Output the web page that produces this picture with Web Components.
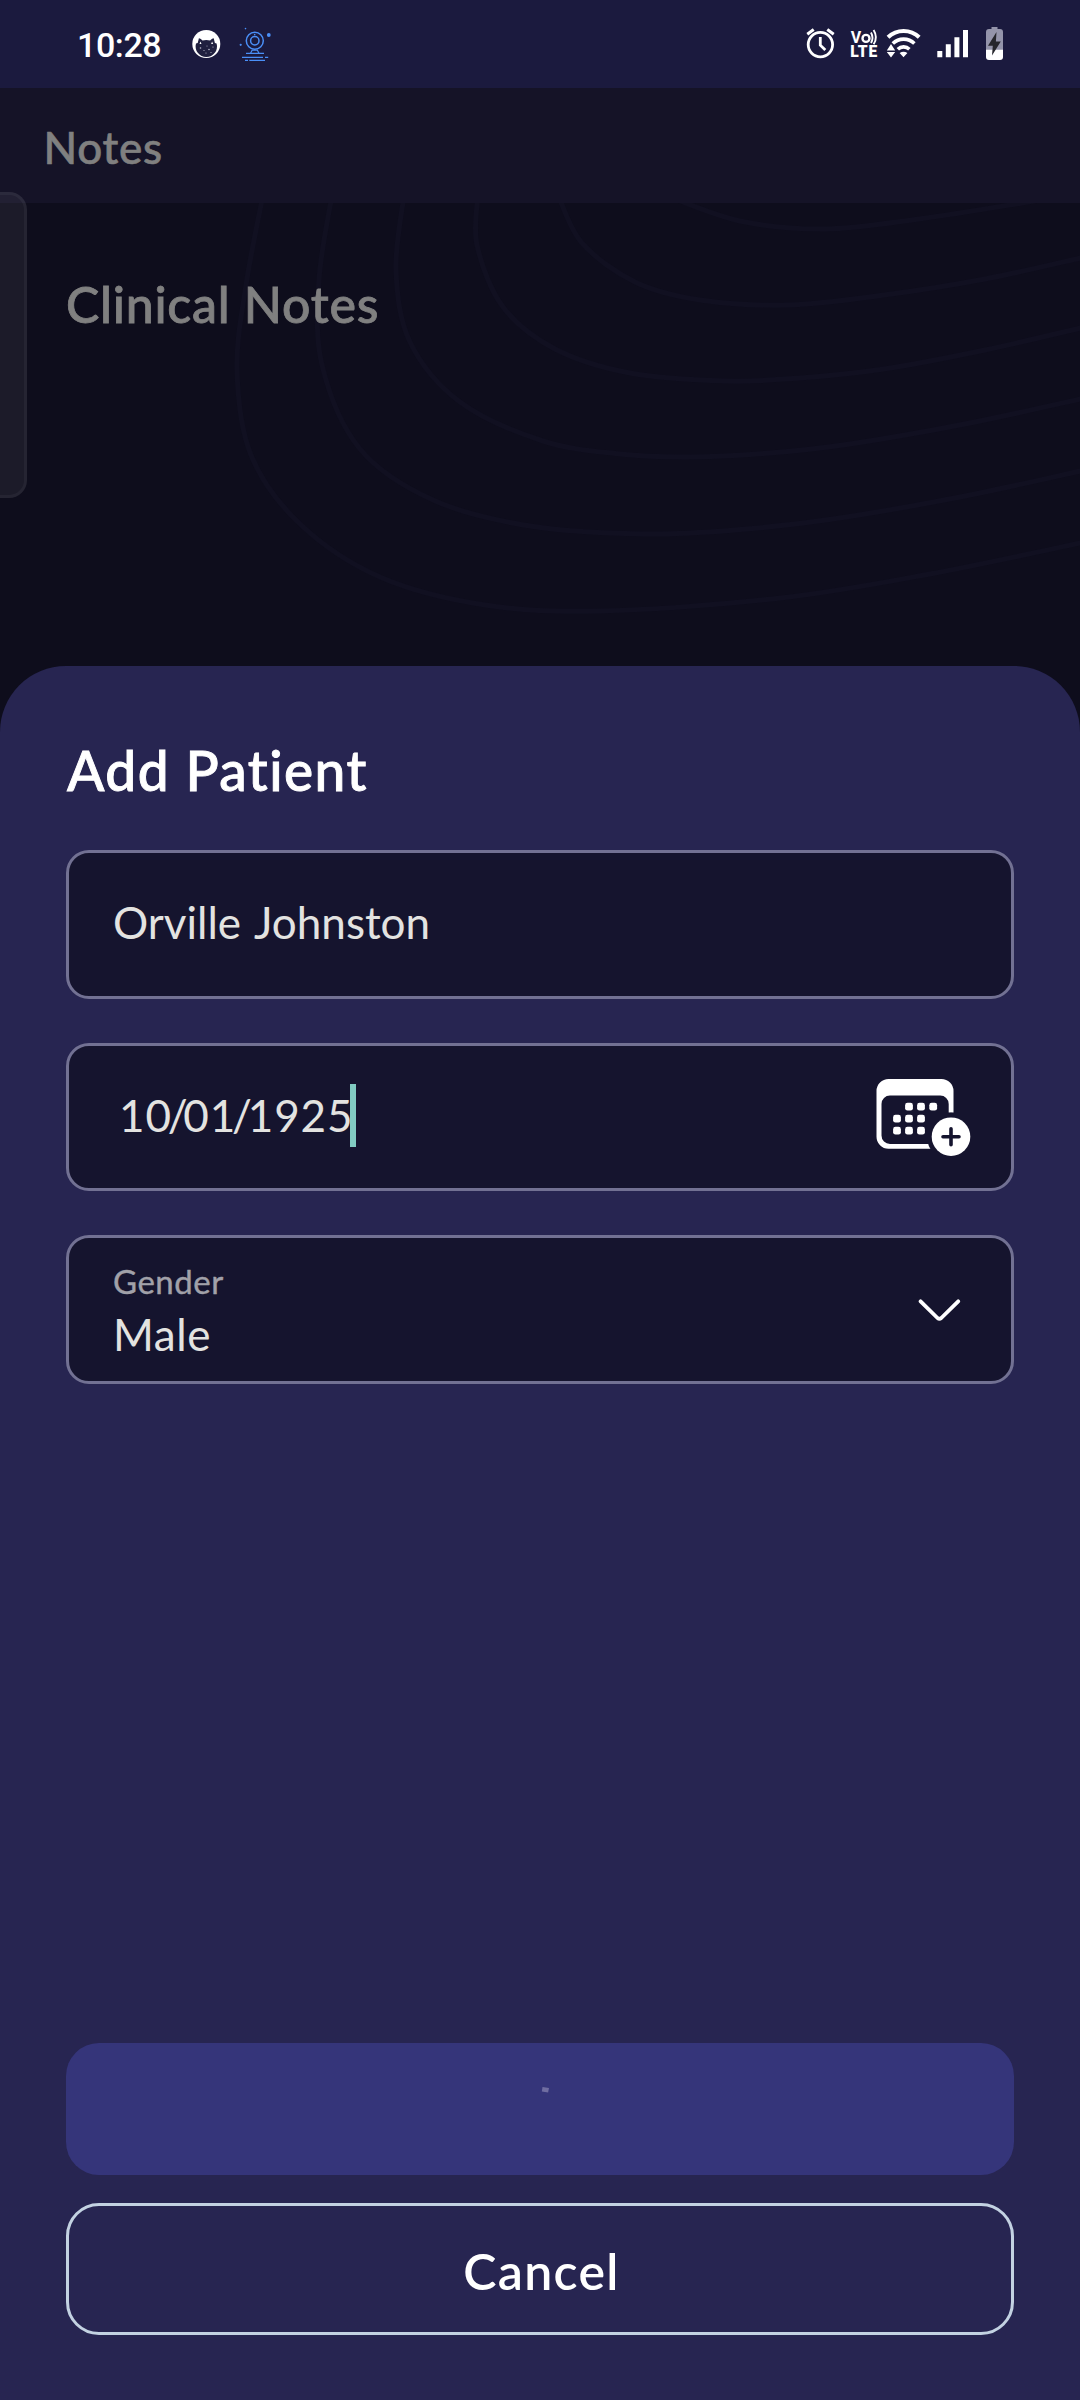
<!DOCTYPE html>
<html lang="en">
<head>
<meta charset="utf-8">
<title>Add Patient</title>
<style>
html,body{margin:0;background:#0e0d1c}
body{font-family:Lato,"Open Sans",sans-serif}
.date i{font-style:normal;letter-spacing:0;margin:0 -4.2px}
</style>
</head>
<body>
<app-screen>
  <status-bar slot="status">10:28</status-bar>
  <app-bar slot="bar">Notes</app-bar>
  <notes-pane slot="pane">Clinical Notes</notes-pane>
  <bottom-sheet slot="sheet">
    <span slot="title">Add Patient</span>
    <form-field style="height:149px;--ls:0px;--ws:3px">Orville Johnston</form-field>
    <form-field style="height:148px;--pl:50px;--pr:40px;--ls:.9px"><span class="date">10<i>/</i>01<i>/</i>1925</span><text-caret></text-caret><calendar-icon slot="icon"></calendar-icon></form-field>
    <form-field style="height:149px;--pr:50px;--ls:.6px" label="Gender">Male<chevron-icon slot="icon"></chevron-icon></form-field>
    <sheet-button slot="actions" kind="primary"><busy-mark></busy-mark></sheet-button>
    <sheet-button slot="actions" kind="outline">Cancel</sheet-button>
  </bottom-sheet>
</app-screen>
<script>
const define = (name, html, setup) => customElements.define(name, class extends HTMLElement {
  constructor() {
    super();
    const t = document.createElement('template');
    t.innerHTML = html;
    this.attachShadow({mode: 'open'}).append(t.content.cloneNode(true));
  }
  connectedCallback() { if (setup) setup(this, this.shadowRoot); }
});

define('app-screen', `
<style>
:host{display:flex;flex-direction:column;position:relative;width:1080px;height:2400px;background:#0e0d1c;overflow:hidden}
::slotted([slot=sheet]){flex:1}
.handle{position:absolute;left:-24px;top:192px;width:51px;height:306px;box-sizing:border-box;border:3px solid rgba(255,255,255,.045);border-radius:18px;background:rgba(255,255,255,.06)}
</style>
<slot name="status"></slot><slot name="bar"></slot><slot name="pane"></slot><slot name="sheet"></slot>
<div class="handle"></div>`);

define('status-bar', `
<style>
:host{display:flex;height:88px;box-sizing:border-box;background:#1b1a3e;color:#fff;padding-left:77px}
.time{font:500 34px/91px Roboto,sans-serif;letter-spacing:-.4px;width:105px;white-space:nowrap}
svg{display:block;height:88px}
.sys{margin-left:auto;margin-right:70px}
</style>
<div class="time"><slot></slot></div>
<svg width="98" viewBox="182 0 98 88">
  <circle cx="206.3" cy="44" r="14" fill="#fff"/>
  <path d="M196 43.5l1.7-.6 1.2-4.6c1.2.3 2.6 1.200 3.600 2.200q3.800-.8 7.600 0c1-1 2.400-1.900 3.600-2.200l1.200 4.600 1.700.6a10.700 10.700 0 1 1-20.600 0z" fill="#20203f"/>
  <path d="M200.500 41.500l1 2.500h-2zM212.100 41.500l1 2.500h-2z" fill="#fff"/>
  <g fill="#b9b9c9"><circle cx="200.500" cy="48" r=".8"/><circle cx="204" cy="50.500" r=".6"/><circle cx="209" cy="49.500" r=".8"/><circle cx="213" cy="47" r=".6"/><circle cx="207" cy="46" r=".5"/><circle cx="206" cy="53" r=".6"/><circle cx="211" cy="52.500" r=".6"/></g>
  <g fill="none" stroke="#4a8ff7" stroke-width="1.500">
    <circle cx="254.800" cy="40.800" r="8.500"/><circle cx="254.800" cy="40.800" r="4.200"/>
    <path d="M252.500 49.500l-2 3.800M257 49.500l2 3.800M252 50.200h5.500M246 53.400h18M242 57.300h21M265 57.300h3.200M245 60.300h3M249.300 60.300h15.700" stroke-width="1.200"/>
  </g>
  <g fill="#4a8ff7"><circle cx="254.700" cy="34.600" r=".8"/><circle cx="245.500" cy="28.600" r=".8"/><circle cx="268.800" cy="35" r="1.900"/><circle cx="240.700" cy="44.800" r="1.100"/></g>
</svg>
<svg class="sys" width="210" viewBox="800 0 210 88">
  <g fill="none" stroke="#fff">
    <circle cx="820.400" cy="44.600" r="12.200" stroke-width="2.800"/>
    <path d="M807.300 34.200l6.400-4.700M827.300 29.500l6.400 4.700" stroke-width="3"/>
    <path d="M820.300 37v8.200l5 4.800" stroke-width="2.800"/>
    <circle cx="866" cy="38.400" r="3.500" stroke-width="2.400"/>
    <path d="M871 32.500q3 5.500 0 10.500M873.600 30q4.600 7.500 0 14.300" stroke-width="1.900"/>
    <path d="M888 37.300a22.500 22.500 0 0 1 31.200 0" stroke-width="4"/>
    <path d="M892.800 43.500a15.500 15.500 0 0 1 21.600 0" stroke-width="3.600"/>
    <path d="M897.800 49.200a8.500 8.500 0 0 1 11.600 0" stroke-width="3.600"/>
  </g>
  <g fill="#fff">
    <text x="850.800" y="43" font-family="Roboto,sans-serif" font-weight="700" font-size="16">V</text>
    <text x="850.200" y="57.200" font-family="Roboto,sans-serif" font-weight="900" font-size="15.600" textLength="27">LTE</text>
    <path d="M899.600 53q4-2.400 7.800 0l-3.900 4.200zM891 44l4.200 6.600h-8.400zM886.800 51.900h8.400l-4.200 5.700z"/>
    <path d="M937.300 51h5v6.200h-5zM945.800 44.300h5v12.900h-5zM954.400 37.300h5v19.900h-5zM963 30h5v27.200h-5z"/>
    <path d="M991.500 27h6v2h2.500q3 0 3 3v18h-17V32q0-3 3-3h2.500z" fill="#9494aa"/>
    <path d="M986 49.700h17V57q0 3-3 3h-11q-3 0-3-3z"/>
    <path d="M996.500 32l-8.500 13.700h4.800L992 55.500l8.800-14h-4.900z" fill="#26262c"/>
  </g>
</svg>`);

define('app-bar', `
<style>:host{display:flex;align-items:center;height:115px;box-sizing:border-box;padding:2px 0 0 43.500px;background:#151327;color:#808080;font-size:44px;font-weight:500;letter-spacing:.7px;-webkit-text-stroke:.6px #808080}</style>
<slot></slot>`);

define('notes-pane', `
<style>
:host{display:block;position:relative;height:463px;box-sizing:border-box;padding:71px 0 0 66px;color:#808080;font-size:50px;line-height:60px;font-weight:500;letter-spacing:.75px;-webkit-text-stroke:.8px #808080}
svg{position:absolute;inset:0}
.t{position:relative}
</style>
<svg width="1080" height="463" viewBox="0 203 1080 463" fill="none" stroke="#111021" stroke-width="5"></svg>
<div class="t"><slot></slot></div>`, (host, root) => {
  // Contour lines: points on each line, joined by Catmull-Rom segments.
  const lines = [
    [[263,195],[246,285],[237,370],[251,455],[300,524],[380,577],[485,605],[602,611],[781,598],[930,574],[1085,542]],
    [[332,195],[319,280],[322,365],[360,449],[433,500],[530,526],[643,534],[735,530],[833,519],[960,497],[1085,470]],
    [[404,195],[396,270],[410,342],[460,402],[543,441],[620,454],[688,457],[770,453],[850,444],[970,423],[1085,398]],
    [[478,195],[477,245],[503,307],[555,349],[630,373],[726,381],[800,378],[884,369],[985,350],[1085,327]],
    [[558,195],[582,243],[635,282],[700,300],[788,305],[884,295],[985,279],[1085,257]],
    [[665,195],[740,221],[826,229],[919,219],[1022,203],[1060,196]]
  ];
  const path = p => p.slice(1).reduce((d, b, i) => {
    const a = p[i], z = p[i - 1] || a, n = p[i + 2] || b;
    return d + `C${a[0]+(b[0]-z[0])/6} ${a[1]+(b[1]-z[1])/6} ${b[0]-(n[0]-a[0])/6} ${b[1]-(n[1]-a[1])/6} ${b[0]} ${b[1]}`;
  }, `M${p[0][0]} ${p[0][1]}`);
  root.querySelector('svg').innerHTML = lines.map(l => `<path d="${path(l)}"/>`).join('');
});

define('bottom-sheet', `
<style>
:host{display:flex;flex-direction:column;box-sizing:border-box;padding:71px 66px 65px;border-radius:66px 66px 0 0;background:#272551}
h1{margin:0 0 47px 1px;font-size:55px;line-height:66px;font-weight:500;letter-spacing:1.45px;color:#fff;-webkit-text-stroke:.9px #fff}
.fields{display:flex;flex-direction:column;gap:44px}
.actions{display:flex;flex-direction:column;gap:28px;margin-top:auto}
</style>
<h1><slot name="title"></slot></h1>
<div class="fields"><slot></slot></div>
<div class="actions"><slot name="actions"></slot></div>`);

define('form-field', `
<style>
:host{display:flex;align-items:center;box-sizing:border-box;border:3px solid #727193;border-radius:23px;background:#15142e;padding:0 var(--pr,44px) 0 var(--pl,44px)}
.body{flex:1}
.label{font-size:33px;line-height:40px;letter-spacing:.5px;color:#a1a1a9;-webkit-text-stroke:.4px #a1a1a9;margin-bottom:6px}
.label:empty{display:none}
.value{display:flex;align-items:center;font-size:44px;line-height:54px;letter-spacing:var(--ls,0);word-spacing:var(--ws,0);color:#e3e3e1;padding-bottom:5px}
.label:not(:empty)+.value{padding-bottom:0;margin-bottom:-2px}
</style>
<div class="body"><div class="label"></div><div class="value"><slot></slot></div></div>
<slot name="icon"></slot>`, (host, root) => {
  root.querySelector('.label').textContent = host.getAttribute('label') || '';
});

define('text-caret', `<style>:host{display:block;width:6px;height:63px;margin:-8px 0 -10px -3.500px;background:#81cbc2}</style>`);

define('calendar-icon', `
<style>:host,svg{display:block}</style>
<svg width="95" height="78" viewBox="876 1078 95 78">
  <defs><mask id="m"><rect x="870" y="1070" width="110" height="100" fill="#fff"/><circle cx="951" cy="1136.700" r="24" fill="#000"/></mask></defs>
  <path mask="url(#m)" fill="#fff" fill-rule="evenodd" d="M888.500 1079h53a12 12 0 0 1 12 12v21.500h-4.800V1104a8.500 8.500 0 0 0-8.500-8.500h-50.200a8.500 8.500 0 0 0-8.500 8.500v31.500a8.500 8.500 0 0 0 8.500 8.500h50.200v4.800h-51.700a12 12 0 0 1-12-12V1091a12 12 0 0 1 12-12z"/>
  <g id="d" fill="#fff"></g>
  <circle cx="951" cy="1136.700" r="19.300" fill="#fff"/>
  <path d="M951 1128.700v16M943 1136.700h16" stroke="#15142e" stroke-width="3.600" stroke-linecap="round"/>
</svg>`, (host, root) => {
  const dots = [[909,0],[921,0],[933.200,0],[897,1],[909,1],[921,1],[897,2],[909,2],[921,2]];
  root.querySelector('#d').innerHTML = dots.map(([x, r]) => `<rect x="${x-3.9}" y="${1102.8+12*r}" width="7.800" height="7.800" rx="2.400"/>`).join('');
});

define('chevron-icon', `
<style>:host,svg{display:block}</style>
<svg width="43" height="24" viewBox="918 1297.500 43 24" fill="none" stroke="#fff" stroke-width="3.800" stroke-linecap="round" stroke-linejoin="round"><path d="M920.600 1300.800l16.900 16.700q1.900 1.500 3.800 0l16.900-16.700"/></svg>`);

define('sheet-button', `
<style>
:host{display:flex;align-items:center;justify-content:center;height:132px;box-sizing:border-box;border-radius:33px;font-size:50px;font-weight:600;letter-spacing:1.3px;color:#fff}
:host([kind=primary]){background:#35357a}
:host([kind=outline]){border:3px solid #c3d2e2;padding:3px 0 0 3px}
</style>
<slot></slot>`);

define('busy-mark', `
<style>:host,svg{display:block}</style>
<svg width="44" height="44" viewBox="518 2087 44 44"><path d="M542.500 2087l6.500.9-.9 4.600-6.300-.9z" fill="#6f6da1"/></svg>`);
</script>
</body>
</html>
